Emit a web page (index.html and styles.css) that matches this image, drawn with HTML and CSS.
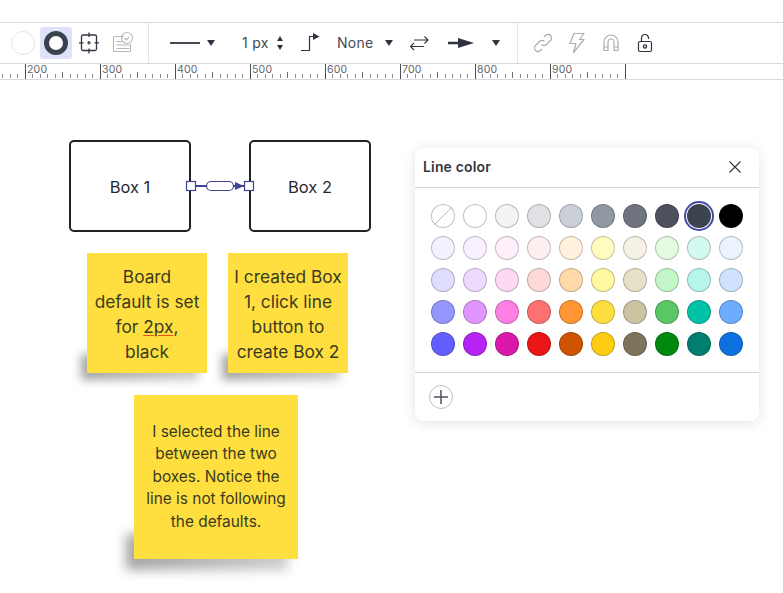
FILE: index.html
```html
<!DOCTYPE html>
<html lang="en">
<head>
<meta charset="utf-8">
<title>Line color</title>
<link rel="stylesheet" href="styles.css">
</head>
<body>
<div class="topgap"></div>
<div class="toolbar">
  <div class="group group-a">
    <button class="cell"><span class="fill-dot"></span></button>
    <button class="cell cell-on"><span class="ring-dot"></span></button>
    <button class="cell">
      <svg class="ico" width="24" height="24" viewBox="0 0 24 24" fill="none" stroke="#2f3540" stroke-width="1.300"><rect x="4.500" y="4" width="15" height="15.500" rx="1.500"/><path d="M12 1.500v4.500M12 17.500v5M2 11.800h4.500M17.500 11.800h4.500M12 10v3.500M10.300 11.800h3.400"/></svg>
    </button>
    <button class="cell cell-last">
      <svg class="ico" width="24" height="24" viewBox="0 0 24 24" fill="none" stroke="#b4b7bc" stroke-width="1.100"><path d="M13 5.500H3.500A1 1 0 0 0 2.500 6.500v13a1 1 0 0 0 1 1h15a1 1 0 0 0 1-1v-6.500"/><path d="M5.500 10.500h6M5.500 14h13M5.500 17.500h13"/><circle cx="16" cy="7" r="5.500"/><path d="M13.600 7l1.800 1.900 3-3.400"/></svg>
    </button>
  </div>
  <div class="group group-b">
    <div class="pick"><span class="line-sample"></span></div>
    <div class="pick"><span class="caret"></span></div>
    <div class="pick pick-text">1 px</div>
    <div class="pick"><span class="stepper"><span class="tri-up"></span><span class="tri-down"></span></span></div>
    <div class="pick">
      <svg width="20" height="22" viewBox="0 0 20 22" fill="none"><path d="M1 18.500h8.500V4.500h4" stroke="#2f3540" stroke-width="1.200"/><path d="M13 1l6.500 3.500-6.500 3.500z" fill="#2f3540"/></svg>
    </div>
    <div class="pick pick-text">None</div>
    <div class="pick"><span class="caret"></span></div>
    <div class="pick">
      <svg width="20" height="20" viewBox="0 0 20 20" fill="none" stroke="#2f3540" stroke-width="1.100"><path d="M5 7h14M15.500 3.500L19 7l-3.500 3.500M15 13.500H1.500M5 10l-3.500 3.500L5 17"/></svg>
    </div>
    <div class="pick">
      <svg width="26" height="12" viewBox="0 0 26 12"><path d="M0 6h12" stroke="#2f3540" stroke-width="2.500"/><path d="M10 1l16 5-16 5z" fill="#2f3540"/></svg>
    </div>
    <div class="pick"><span class="caret"></span></div>
  </div>
  <div class="group group-c">
    <button class="cell-c">
      <svg width="22" height="22" viewBox="0 0 22 22" fill="none" stroke="#a9acb2" stroke-width="1.200"><path d="M9.500 12.500a3.500 3.500 0 0 0 5 0l4-4a3.500 3.500 0 0 0-5-5l-1.500 1.500"/><path d="M12.500 9.500a3.500 3.500 0 0 0-5 0l-4 4a3.500 3.500 0 0 0 5 5l1.500-1.500"/></svg>
    </button>
    <button class="cell-c">
      <svg width="22" height="22" viewBox="0 0 22 22" fill="none" stroke="#a9acb2" stroke-width="1.200" stroke-linejoin="round"><path d="M8 1.500h10l-4.500 6h4.500L7.500 20.500 10 11.500H4z"/></svg>
    </button>
    <button class="cell-c">
      <svg width="22" height="22" viewBox="0 0 22 22" fill="none" stroke="#a9acb2" stroke-width="1.200"><path d="M4 18.500V10a7 7 0 0 1 14 0v8.500h-4V10a3 3 0 0 0-6 0v8.500zM4 15h4M14 15h4"/></svg>
    </button>
    <button class="cell-c">
      <svg width="22" height="22" viewBox="0 0 22 22" fill="none" stroke="#2f3540" stroke-width="1.200"><rect x="4.500" y="9.500" width="13" height="10" rx="1.500"/><path d="M7.500 9.500V6a3.500 3.500 0 0 1 7 0v1"/><circle cx="11" cy="14.500" r="1.600" stroke-width="1.400"/></svg>
    </button>
  </div>
</div>
<div class="ruler">
  <span class="seg seg-lead"></span>
  <span class="seg">200</span><span class="seg">300</span><span class="seg">400</span><span class="seg">500</span>
  <span class="seg">600</span><span class="seg">700</span><span class="seg">800</span><span class="seg seg-end">900</span>
</div>
<main class="canvas">
  <div class="box box-one">Box 1</div>
  <div class="box box-two">Box 2</div>
  <svg class="connector" width="72" height="20" viewBox="0 0 72 20" fill="none">
    <path d="M6 10h54" stroke="#3f4491" stroke-width="2"/>
    <path d="M51 6l9 4-9 4z" fill="#3f4491"/>
    <rect x="22.500" y="5.500" width="27" height="9" rx="4.500" fill="#fff" stroke="#3f4491" stroke-width="1.200"/>
    <rect x="2.500" y="5.500" width="9" height="9" fill="#fff" stroke="#3f4491" stroke-width="1.200"/>
    <rect x="60.500" y="5.500" width="9" height="9" fill="#fff" stroke="#3f4491" stroke-width="1.200"/>
  </svg>
  <div class="sticky sticky-one"><span>Board default is set for <u class="spell">2px</u>, black</span></div>
  <div class="sticky sticky-two"><span>I created Box 1, click line button to create Box 2</span></div>
  <div class="sticky sticky-three"><span>I selected the line between the two boxes. Notice the line is not following the defaults.</span></div>
  <section class="panel">
    <header class="panel-head">
      <h2 class="panel-title">Line color</h2>
      <svg width="14" height="14" viewBox="0 0 14 14" fill="none" stroke="#2f3540" stroke-width="1.100"><path d="M1.500 1.500l11 11M12.500 1.500l-11 11"/></svg>
    </header>
    <div class="swatches">
      <span class="sw sw-none"></span><span class="sw c-ffffff"></span><span class="sw c-f2f3f5"></span><span class="sw c-dfe1e5"></span><span class="sw c-cbd0d8"></span><span class="sw c-9298a2"></span><span class="sw c-6f747f"></span><span class="sw c-4c515c"></span><span class="sw sw-sel c-3a434e"></span><span class="sw c-000000"></span>
      <span class="sw c-f1f1ff"></span><span class="sw c-f9f0ff"></span><span class="sw c-ffeffb"></span><span class="sw c-ffeef0"></span><span class="sw c-fff1db"></span><span class="sw c-fffcc2"></span><span class="sw c-f5f2e3"></span><span class="sw c-e3fae0"></span><span class="sw c-d4f9f1"></span><span class="sw c-ecf3ff"></span>
      <span class="sw c-e0deff"></span><span class="sw c-f0d9ff"></span><span class="sw c-ffd8f6"></span><span class="sw c-ffd8d8"></span><span class="sw c-ffdaa8"></span><span class="sw c-fff7a1"></span><span class="sw c-e5e0c6"></span><span class="sw c-c4f7c7"></span><span class="sw c-b5f5ea"></span><span class="sw c-cfe2ff"></span>
      <span class="sw c-9596ff"></span><span class="sw c-e095ff"></span><span class="sw c-ff80e3"></span><span class="sw c-ff7070"></span><span class="sw c-ff9633"></span><span class="sw c-ffdf3d"></span><span class="sw c-ccc3a3"></span><span class="sw c-58c866"></span><span class="sw c-00c2a8"></span><span class="sw c-6eacff"></span>
      <span class="sw c-635eff"></span><span class="sw c-b723f5"></span><span class="sw c-db18aa"></span><span class="sw c-ea1515"></span><span class="sw c-cf5300"></span><span class="sw c-ffcc12"></span><span class="sw c-7f735b"></span><span class="sw c-00880f"></span><span class="sw c-007f70"></span><span class="sw c-0e71e0"></span>
    </div>
    <footer class="panel-foot">
      <span class="add">
        <svg width="14" height="14" viewBox="0 0 14 14" stroke="#4c515c" stroke-width="1.500"><path d="M7 0v14M0 7h14"/></svg>
      </span>
    </footer>
  </section>
</main>
</body>
</html>
```

FILE: styles.css
```css
* { box-sizing: border-box; }
html, body { margin: 0; padding: 0; }
body {
  width: 783px;
  height: 593px;
  overflow: hidden;
  background: #fff;
  font-family: Inter, "Liberation Sans", sans-serif;
  color: #2f3540;
}
.topgap { height: 23px; border-bottom: 1px solid #d8dadc; }
.toolbar { display: flex; height: 41px; border-bottom: 1px solid #d8dadc; }
.group { display: flex; align-items: center; height: 40px; }
.group-a { width: 149px; padding-left: 7px; gap: 1px; border-right: 1px solid #e2e4e6; }
.group-b { width: 369px; padding-left: 21px; border-right: 1px solid #e2e4e6; }
.group-c { padding-left: 8px; }
.cell, .cell-c {
  display: flex; align-items: center; justify-content: center;
  padding: 0; border: 0; background: none;
}
.cell { width: 32px; height: 32px; border-radius: 3px; }
.cell-on { background: #e0e1fb; }
.cell-last { margin-left: 1px; }
.cell-c { width: 34px; height: 32px; }
.fill-dot { width: 24px; height: 24px; border-radius: 50%; background: #fff; border: 1px solid #e3e4e6; }
.ring-dot { width: 24px; height: 24px; border-radius: 50%; background: #fff; border: 5px solid #3a424d; }
.pick { display: flex; align-items: center; height: 32px; }
.pick:nth-child(1) { width: 37px; }
.pick:nth-child(2) { width: 34px; }
.pick:nth-child(3) { width: 35.500px; padding-left: 1px; }
.pick:nth-child(4) { width: 23.500px; }
.pick:nth-child(5) { width: 36px; }
.pick:nth-child(6) { width: 49px; padding-left: 1px; }
.pick:nth-child(7) { width: 24px; }
.pick:nth-child(8) { width: 39px; }
.pick:nth-child(9) { width: 44px; }
.pick-text { padding-bottom: 2px; font-size: 14px; letter-spacing: 0.300px; color: #454a55; }
.line-sample { display: block; width: 30px; height: 2px; background: #454a52; }
.caret { display: block; width: 0; height: 0; border-left: 4.500px solid transparent; border-right: 4.500px solid transparent; border-top: 6.500px solid #2f3540; }
.stepper { display: flex; flex-direction: column; gap: 4px; }
.tri-up, .tri-down { display: block; width: 0; height: 0; border-left: 3.500px solid transparent; border-right: 3.500px solid transparent; }
.tri-up { border-bottom: 5px solid #2f3540; }
.tri-down { border-top: 5px solid #2f3540; }
.ruler {
  display: flex;
  height: 16px;
  border-bottom: 1px solid #d8dadc;
  overflow: hidden;
}
.seg {
  flex: none;
  width: 75px;
  height: 15px;
  padding-left: 1px;
  font-size: 10.500px;
  line-height: 11px;
  letter-spacing: 0.200px;
  color: #5f6570;
  border-left: 1px solid #4a4f58;
  background:
    linear-gradient(#6a6f78, #6a6f78) 36px 8px / 1px 6px no-repeat,
    repeating-linear-gradient(90deg, transparent 0, transparent 6px, #85888f 6px, #85888f 7px, transparent 7px, transparent 14px, #85888f 14px, #85888f 15px) 0 10px / 100% 4px no-repeat;
}
.seg-lead {
  width: 25px;
  border-left: 0;
  padding: 0;
  background: repeating-linear-gradient(270deg, transparent 0, transparent 7px, #85888f 7px, #85888f 8px, transparent 8px, transparent 14px, #85888f 14px, #85888f 15px) 0 10px / 100% 4px no-repeat;
}
.seg-end { border-right: 1px solid #4a4f58; width: 76px; }
.canvas { position: relative; z-index: 0; height: 513px; }
.box {
  position: absolute;
  display: flex; align-items: center; justify-content: center;
  width: 122px; height: 92px;
  top: 60px;
  padding-top: 1px;
  border: 2px solid #1f2328;
  border-radius: 5px;
  font-size: 16.500px;
  color: #26292f;
}
.box-one { left: 69px; }
.box-two { left: 249px; }
.connector { position: absolute; left: 184px; top: 96px; }
.sticky {
  position: absolute;
  display: flex; align-items: center; justify-content: center;
  background: #ffdf3f;
  text-align: center;
  color: #3b3a20;
}
.sticky::before {
  content: "";
  position: absolute;
  z-index: -1;
  left: -6px;
  right: 8px;
  bottom: -7px;
  height: 22%;
  background: linear-gradient(90deg, rgba(0, 0, 0, .36), rgba(0, 0, 0, .2));
  filter: blur(5px);
}
.sticky-one, .sticky-two { width: 120px; height: 120px; top: 173px; padding: 2px 4px 0; font-size: 17.300px; line-height: 25px; }
.sticky-one { left: 87px; padding: 2px 6px 0; }
.sticky-two { left: 228px; }
.sticky-three { left: 134px; top: 315px; width: 164px; height: 164px; padding: 0 10px; font-size: 15.400px; line-height: 22.400px; }
.sticky-three::before { left: -8px; right: 10px; bottom: -11px; height: 22%; filter: blur(6px); }
.spell { text-decoration: underline; text-decoration-color: #e0561a; text-decoration-thickness: 1px; text-underline-offset: 2px; }
.panel {
  position: absolute;
  left: 415px; top: 68px;
  width: 344px; height: 273px;
  background: #fff;
  border-radius: 8px;
  box-shadow: 0 2px 14px rgba(0,0,0,.11);
}
.panel-head {
  display: flex; align-items: center; justify-content: space-between;
  height: 40px;
  padding: 0 17px 1px 8px;
  border-bottom: 1px solid #d3d4d6;
}
.panel-title { margin: 0 0 1px; font-size: 14px; line-height: 16px; font-weight: 600; letter-spacing: 0.150px; color: #33373d; }
.swatches {
  display: grid;
  grid-template-columns: repeat(10, 24px);
  gap: 8px;
  padding: 16px;
  height: 185px;
  border-bottom: 1px solid #d3d4d6;
}
.sw { width: 24px; height: 24px; border-radius: 50%; border: 1px solid rgba(40,40,40,.28); }
.sw-none { background: linear-gradient(135deg, #fff 49%, #b9bbbf 49%, #b9bbbf 52%, #fff 52%); }
.sw-sel { box-shadow: 0 0 0 1px #fff, 0 0 0 3px #4248a8; border-color: transparent; }
.c-ffffff { background: #ffffff; } .c-f2f3f5 { background: #f2f3f5; } .c-dfe1e5 { background: #dfe1e5; } .c-cbd0d8 { background: #cbd0d8; } .c-9298a2 { background: #9298a2; } .c-6f747f { background: #6f747f; } .c-4c515c { background: #4c515c; } .c-3a434e { background: #3a434e; } .c-000000 { background: #000000; }
.c-f1f1ff { background: #f1f1ff; } .c-f9f0ff { background: #f9f0ff; } .c-ffeffb { background: #ffeffb; } .c-ffeef0 { background: #ffeef0; } .c-fff1db { background: #fff1db; } .c-fffcc2 { background: #fffcc2; } .c-f5f2e3 { background: #f5f2e3; } .c-e3fae0 { background: #e3fae0; } .c-d4f9f1 { background: #d4f9f1; } .c-ecf3ff { background: #ecf3ff; }
.c-e0deff { background: #e0deff; } .c-f0d9ff { background: #f0d9ff; } .c-ffd8f6 { background: #ffd8f6; } .c-ffd8d8 { background: #ffd8d8; } .c-ffdaa8 { background: #ffdaa8; } .c-fff7a1 { background: #fff7a1; } .c-e5e0c6 { background: #e5e0c6; } .c-c4f7c7 { background: #c4f7c7; } .c-b5f5ea { background: #b5f5ea; } .c-cfe2ff { background: #cfe2ff; }
.c-9596ff { background: #9596ff; } .c-e095ff { background: #e095ff; } .c-ff80e3 { background: #ff80e3; } .c-ff7070 { background: #ff7070; } .c-ff9633 { background: #ff9633; } .c-ffdf3d { background: #ffdf3d; } .c-ccc3a3 { background: #ccc3a3; } .c-58c866 { background: #58c866; } .c-00c2a8 { background: #00c2a8; } .c-6eacff { background: #6eacff; }
.c-635eff { background: #635eff; } .c-b723f5 { background: #b723f5; } .c-db18aa { background: #db18aa; } .c-ea1515 { background: #ea1515; } .c-cf5300 { background: #cf5300; } .c-ffcc12 { background: #ffcc12; } .c-7f735b { background: #7f735b; } .c-00880f { background: #00880f; } .c-007f70 { background: #007f70; } .c-0e71e0 { background: #0e71e0; }
.panel-foot { padding: 12px 14px; }
.add {
  display: flex; align-items: center; justify-content: center;
  width: 24px; height: 24px;
  border-radius: 50%;
  border: 1px solid #bcbec2;
}
```
